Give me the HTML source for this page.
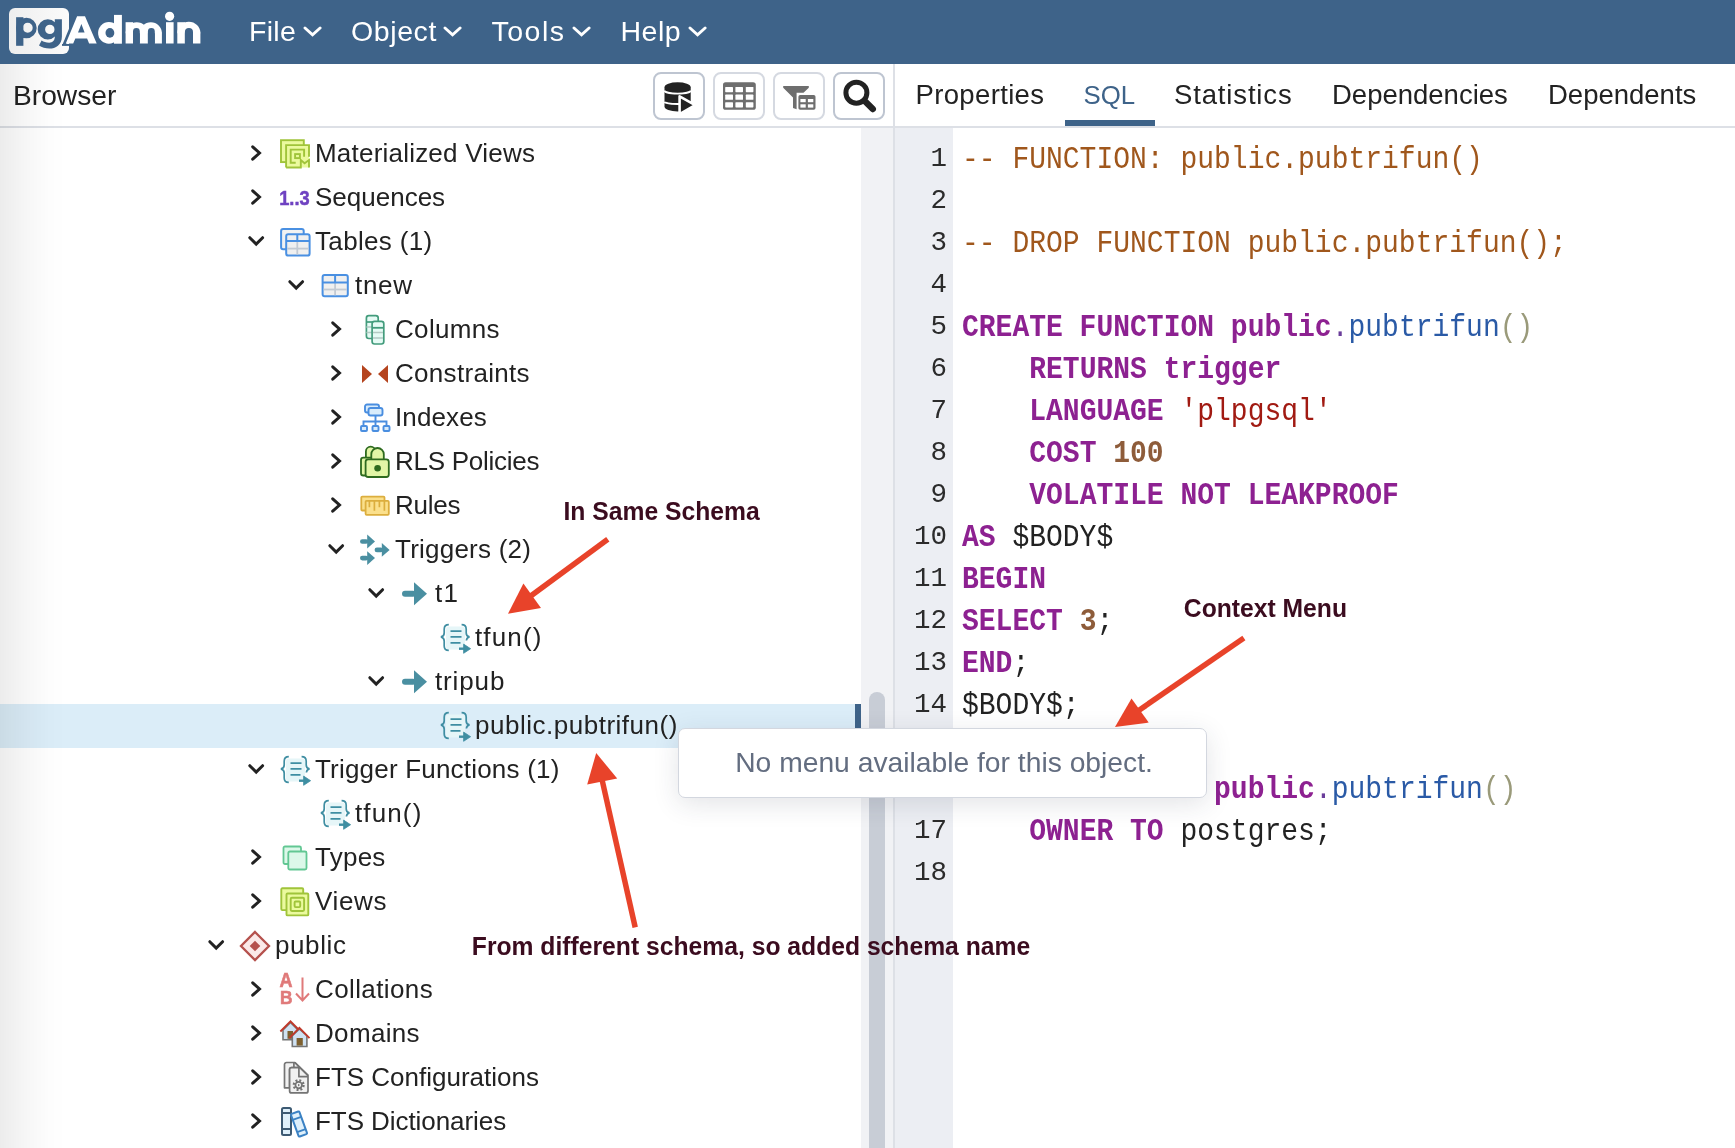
<!DOCTYPE html>
<html><head><meta charset="utf-8"><title>pgAdmin</title><style>
html,body{margin:0;padding:0}
body{width:1735px;height:1148px;overflow:hidden;position:relative;background:#fff;font-family:"Liberation Sans",sans-serif;color:#222}
.abs{position:absolute}
#wrap{position:absolute;left:0;top:0;width:1735px;height:1148px;will-change:transform}
#hdr{left:0;top:0;width:1735px;height:64px;background:#3e6389}
.menu{position:absolute;top:0;height:64px;line-height:63.6px;font-size:28.5px;color:#fff}
#vig{left:0;top:64px;width:120px;height:1084px;background:linear-gradient(to right,rgba(0,0,0,0.075),rgba(0,0,0,0.035) 25px,rgba(0,0,0,0.008) 50px,rgba(0,0,0,0) 66px);z-index:5;pointer-events:none}
#browser{left:13px;top:64px;height:62px;line-height:63px;font-size:28.2px;color:#222}
.btn{position:absolute;top:72px;width:48px;height:44px;border:2px solid #bec5d1;border-radius:8px;background:#fff}
.btn.dis{border-color:#d5d9e1}
#lline{left:0;top:126px;width:893px;height:2px;background:#dde0e6}
#rline{left:895px;top:126px;width:840px;height:2px;background:#dde0e6}
#vdiv{left:893px;top:64px;width:2px;height:1084px;background:#dde0e6}
.tab{position:absolute;top:64px;height:62px;line-height:62px;font-size:27.5px;color:#222}
#sqlul{left:1065px;top:120px;width:90px;height:6px;background:#3e6389}
#gutter{left:895px;top:128px;width:58px;height:1020px;background:#eceef3}
#track{left:861px;top:128px;width:32px;height:1020px;background:#f1f2f5}
#thumb{left:869px;top:692px;width:16px;height:470px;background:#c8cdd6;border-radius:8px}
#sel{left:0;top:704px;width:855px;height:44px;background:#dbedf8}
#selbar{left:855px;top:704px;width:6px;height:44px;background:#3e6389}
.tr{position:absolute;height:44px;line-height:42px;font-size:26px;white-space:pre;color:#222}
.ln{position:absolute;left:897px;margin-top:-1.5px;width:50px;text-align:right;height:42px;line-height:42px;font-family:"Liberation Mono",monospace;font-size:27.5px;color:#2b2b2b}
.cl{position:absolute;left:962px;height:42px;line-height:42px;font-family:"Liberation Mono",monospace;font-size:28px;white-space:pre;color:#222;transform:scaleY(1.12);transform-origin:0 28.5px}
.cm{color:#a0571c}
.kw{color:#8d2191;font-weight:bold}
.fn{color:#2a5aa6}
.dot{color:#6a3d9a}
.br{color:#9a9a7a}
.st{color:#a11a12}
.nm{color:#8e5c3a;font-weight:bold}
#popup{left:678px;top:728px;width:526.5px;height:67.5px;background:#fff;border:1.8px solid #d3d7df;border-radius:7px;box-shadow:0 6px 26px rgba(40,50,70,0.13);z-index:10}
#popup span{position:absolute;left:56.2px;top:0;line-height:66.5px;font-size:28.25px;color:#636d80;white-space:pre}
.ann{position:absolute;font-weight:bold;font-size:24.7px;color:#3b0c1f;white-space:pre;z-index:20;transform:scaleY(1.05);transform-origin:0 8px}
#ov{position:absolute;left:0;top:0;z-index:30;pointer-events:none}
</style></head>
<body>
<div id="wrap">
<div id="hdr" class="abs"></div>
<svg class="abs" style="left:0;top:0" width="220" height="64" viewBox="0 0 220 64">
<defs><linearGradient id="lg" x1="0" x2="1" y1="0" y2="0"><stop offset="0" stop-color="#eeeeee"/><stop offset="1" stop-color="#fbfbfb"/></linearGradient></defs>
<rect x="9" y="8" width="60" height="46" rx="6" fill="url(#lg)"/>
<g fill="#3e6389">
<rect x="16.1" y="17.2" width="7.3" height="28.6"/>
<path fill-rule="evenodd" d="M16.1,28 a10.3,10.3 0 1 0 20.6,0 a10.3,10.3 0 1 0 -20.6,0 z M22.7,27.8 a5,5 0 1 0 10,0 a5,5 0 1 0 -10,0 z"/>
<path fill-rule="evenodd" d="M37.7,29.4 a10.1,10.1 0 1 0 20.2,0 a10.1,10.1 0 1 0 -20.2,0 z M45.1,29.4 a4.75,4.7 0 1 0 9.5,0 a4.75,4.7 0 1 0 -9.5,0 z"/>
<path d="M54.8,19.3 H61.9 V36.5 C61.9,45 55.5,48.6 49.5,48.6 C45.5,48.6 41.8,47.4 39,45.6 L41.6,40.6 C43.5,41.9 46.2,42.7 49.2,42.7 C52.7,42.7 54.8,40.5 54.8,36.8 Z"/>
<line x1="64.2" y1="44.8" x2="71.6" y2="27" stroke="#3e6389" stroke-width="3.4"/>
<rect x="62" y="44" width="8" height="1.9"/>
</g>
<g fill="#fff">
<path fill-rule="evenodd" d="M65.8,43.5 L77.1,16.3 H85 L96.7,43.5 H89.1 L87.1,38.4 H75.3 L73.2,43.5 Z M78,32.4 H84.6 L81.4,23.9 Z"/>
<circle cx="108.9" cy="32.9" r="10.8"/>
<rect x="114" y="14.9" width="7.9" height="28.8"/>
<rect x="125.6" y="22.2" width="7.4" height="21.3"/>
<path d="M125.6,33.35 A11.15,11.15 0 0 1 147.9,33.35 Z M139.8,33.2 A11.05,11.05 0 0 1 161.9,33.2 Z"/>
<rect x="139.8" y="32.5" width="8.1" height="11"/>
<rect x="154.8" y="32.5" width="7.1" height="11"/>
<rect x="166" y="22.2" width="7.6" height="21.3"/>
<circle cx="169.6" cy="16.3" r="4.6"/>
<rect x="177.3" y="22.2" width="7.6" height="21.3"/>
<path d="M177.3,33.2 A11.55,11.55 0 0 1 200.4,33.2 Z"/>
<rect x="193" y="32.5" width="7.4" height="11"/>
</g>
<g fill="#3e6389">
<ellipse cx="109.9" cy="32.9" rx="4.4" ry="4.85"/>
<path d="M133,43.6 V31.5 A3.4,3.4 0 0 1 139.8,31.5 V43.6 Z M147.9,43.6 V31.5 A3.45,3.45 0 0 1 154.8,31.5 V43.6 Z M184.9,43.6 V32 A4.05,4.05 0 0 1 193,32 V43.6 Z"/>
</g>
</svg>
<div class="menu" style="left:249px;letter-spacing:0.3px">File</div><svg class="abs" style="left:302.5px;top:23.5px" width="20" height="16"><polyline points="2,4 9.55,10.9 17.1,4" fill="none" stroke="#fff" stroke-width="2.9" stroke-linecap="round" stroke-linejoin="miter"/></svg><div class="menu" style="left:351px;letter-spacing:0.6px">Object</div><svg class="abs" style="left:442.5px;top:23.5px" width="20" height="16"><polyline points="2,4 9.55,10.9 17.1,4" fill="none" stroke="#fff" stroke-width="2.9" stroke-linecap="round" stroke-linejoin="miter"/></svg><div class="menu" style="left:491.5px;letter-spacing:1.5px">Tools</div><svg class="abs" style="left:571.5px;top:23.5px" width="20" height="16"><polyline points="2,4 9.55,10.9 17.1,4" fill="none" stroke="#fff" stroke-width="2.9" stroke-linecap="round" stroke-linejoin="miter"/></svg><div class="menu" style="left:620.5px;letter-spacing:0.5px">Help</div><svg class="abs" style="left:688px;top:23.5px" width="20" height="16"><polyline points="2,4 9.55,10.9 17.1,4" fill="none" stroke="#fff" stroke-width="2.9" stroke-linecap="round" stroke-linejoin="miter"/></svg>
<div id="browser" class="abs">Browser</div>
<div class="btn" style="left:653px"></div><div class="btn dis" style="left:713px"></div><div class="btn dis" style="left:773px"></div><div class="btn" style="left:833px"></div>
<svg class="abs" style="left:0;top:64px;z-index:2" width="893" height="64" viewBox="0 64 893 64">
<!-- db + play -->
<path fill="#222" d="M664.5,87.2 a13.1,5 0 0 1 26.2,0 v19.2 a13.1,5 0 0 1 -26.2,0 z"/>
<path fill="none" stroke="#fff" stroke-width="1.9" d="M664.5,90.6 a13.1,3 0 0 0 26.2,0 M664.5,101.8 a13.1,2.2 0 0 0 26.2,0"/>
<path fill="#222" stroke="#fff" stroke-width="2.6" stroke-linejoin="round" d="M679.6,96.3 L695.2,105.2 L679.6,114.2 z"/>
<rect x="664" y="113" width="14" height="2" fill="#fff"/>
<!-- grid -->
<rect x="723" y="82.2" width="32.8" height="27.6" rx="2.6" fill="#6e6e6e"/>
<g fill="#fff">
<rect x="725.2" y="87" width="7.8" height="5.2" rx="0.6"/><rect x="735.4" y="87" width="7.6" height="5.2" rx="0.6"/><rect x="745.8" y="87" width="7.6" height="5.2" rx="0.6"/>
<rect x="725.2" y="94.6" width="7.8" height="5.2" rx="0.6"/><rect x="735.4" y="94.6" width="7.6" height="5.2" rx="0.6"/><rect x="745.8" y="94.6" width="7.6" height="5.2" rx="0.6"/>
<rect x="725.2" y="102.2" width="7.8" height="5.2" rx="0.6"/><rect x="735.4" y="102.2" width="7.6" height="5.2" rx="0.6"/><rect x="745.8" y="102.2" width="7.6" height="5.2" rx="0.6"/>
</g>
<!-- filter + table -->
<path d="M783.2,86 h25.6 v1.8 l-5.3,4.9 h-6.9 v16.6 l-3.6,-1.4 v-10.3 l-9.8,-9.8 z" fill="#6e6e6e"/>
<rect x="798.4" y="94.9" width="17.1" height="14.9" rx="1.8" fill="#6e6e6e"/>
<g fill="#fff"><rect x="800.4" y="99" width="5.3" height="3.2"/><rect x="807.9" y="99" width="5.4" height="3.2"/><rect x="800.4" y="104.3" width="5.3" height="3.3"/><rect x="807.9" y="104.3" width="5.4" height="3.3"/></g>
<!-- search -->
<circle cx="856.4" cy="92.7" r="10.5" fill="none" stroke="#222" stroke-width="5"/>
<line x1="865.5" y1="101.8" x2="872.8" y2="109.1" stroke="#222" stroke-width="6.4" stroke-linecap="round"/>
</svg>
<div id="lline" class="abs"></div>
<div id="rline" class="abs"></div>
<div class="tab" style="left:915.5px;letter-spacing:0.35px">Properties</div><div class="tab" style="left:1083.5px;color:#3e6389;font-size:25.8px">SQL</div><div class="tab" style="left:1174px;letter-spacing:0.85px">Statistics</div><div class="tab" style="left:1332px">Dependencies</div><div class="tab" style="left:1548px">Dependents</div>
<div id="sqlul" class="abs"></div>
<div id="track" class="abs"></div>
<div id="thumb" class="abs"></div>
<div id="vdiv" class="abs"></div>
<div id="gutter" class="abs"></div>
<div id="sel" class="abs"></div>
<div id="selbar" class="abs"></div>
<svg class="abs" style="left:0;top:0" width="893" height="1148"><polyline points="252.7,146.8 259.5,153 252.7,159.2" fill="none" stroke="#222" stroke-width="3" stroke-linecap="round" stroke-linejoin="miter"/><g transform="translate(280,140)" fill="none" stroke="#a0c43a" stroke-width="1.9" stroke-linejoin="miter"><rect x="1" y="0.2" width="22.8" height="21.9" fill="#ebfa9e"/><rect x="6.1" y="5.1" width="22.9" height="22.4" fill="#ebfa9e" stroke="none"/><path d="M6.1,27.5 V5.1 H29 V16.7 M6.1,27.5 H20.8 V20.1 L24.6,23.3 L29,20.1 V27.6"/><path d="M24.1,16.7 V9.6 H10.7 V22.7 H15.7"/><rect x="15.1" y="14.1" width="4.8" height="4"/></g><polyline points="252.7,190.8 259.5,197 252.7,203.2" fill="none" stroke="#222" stroke-width="3" stroke-linecap="round" stroke-linejoin="miter"/><text x="279.2" y="205" font-family="Liberation Sans" font-weight="bold" font-size="20.5" fill="#6f42c1" stroke="#6f42c1" stroke-width="0.5" textLength="30.5" lengthAdjust="spacingAndGlyphs">1..3</text><polyline points="249.8,237.7 256.2,244.1 262.6,237.7" fill="none" stroke="#222" stroke-width="3" stroke-linecap="round" stroke-linejoin="miter"/><g transform="translate(280,228)"><rect x="1.1" y="1.1" width="22.6" height="20.2" rx="2" fill="#f2f2f2" stroke="#4a90e2" stroke-width="2"/><rect x="6.2" y="6.2" width="23.4" height="21.4" rx="2" fill="#f0f0f0" stroke="#4a90e2" stroke-width="2"/><line x1="7.2" y1="20.6" x2="28.6" y2="20.6" stroke="#c3cad3" stroke-width="1.8"/><line x1="17.3" y1="13" x2="17.3" y2="26.6" stroke="#c3cad3" stroke-width="1.8"/><line x1="6.2" y1="13" x2="29.6" y2="13" stroke="#4a90e2" stroke-width="2"/><line x1="17.3" y1="6.2" x2="17.3" y2="13" stroke="#4a90e2" stroke-width="2"/></g><polyline points="289.8,281.7 296.2,288.1 302.6,281.7" fill="none" stroke="#222" stroke-width="3" stroke-linecap="round" stroke-linejoin="miter"/><g transform="translate(321.5,274)"><rect x="1.1" y="1.1" width="25.2" height="21.2" rx="2" fill="#f0f0f0" stroke="#4a90e2" stroke-width="2"/><line x1="2.1" y1="15.5" x2="25.3" y2="15.5" stroke="#c3cad3" stroke-width="1.8"/><line x1="13.6" y1="8.5" x2="13.6" y2="21.3" stroke="#c3cad3" stroke-width="1.8"/><line x1="1.1" y1="8.5" x2="26.3" y2="8.5" stroke="#4a90e2" stroke-width="2"/><line x1="13.6" y1="1.1" x2="13.6" y2="8.5" stroke="#4a90e2" stroke-width="2"/></g><polyline points="332.7,322.8 339.5,329 332.7,335.2" fill="none" stroke="#222" stroke-width="3" stroke-linecap="round" stroke-linejoin="miter"/><g transform="translate(365,314.5)"><rect x="1.4" y="1.2" width="11.8" height="22.8" rx="2.4" fill="#e6fbf5" stroke="#439c7c" stroke-width="1.7"/><path d="M1.4,7.5 H13.2" stroke="#439c7c" stroke-width="1.7"/><path d="M1.4,12.6 H7 M1.4,18.1 H7" stroke="#b3c9c3" stroke-width="1.5"/><rect x="7.1" y="6.8" width="11.7" height="22.7" rx="2.4" fill="#e6fbf5" stroke="#439c7c" stroke-width="1.7"/><path d="M7.1,13.3 H18.8" stroke="#439c7c" stroke-width="1.8"/><path d="M7.9,18.1 H18 M7.9,23.4 H18" stroke="#b3c9c3" stroke-width="1.5"/></g><polyline points="332.7,366.8 339.5,373 332.7,379.2" fill="none" stroke="#222" stroke-width="3" stroke-linecap="round" stroke-linejoin="miter"/><g transform="translate(362,365)" fill="#b5441e"><polygon points="0,0 10,9 0,18"/><polygon points="26,0 16,9 26,18"/></g><polyline points="332.7,410.8 339.5,417 332.7,423.2" fill="none" stroke="#222" stroke-width="3" stroke-linecap="round" stroke-linejoin="miter"/><g transform="translate(360,403.5)" fill="#d9ecfb" stroke="#4a8ee0" stroke-width="1.9"><rect x="5" y="1" width="14" height="8" rx="2"/><rect x="8.5" y="4.5" width="14" height="7.5" rx="2"/><polyline points="15.5,12 15.5,22.5" fill="none"/><polyline points="3.5,22.5 3.5,18 26.5,18 26.5,22.5" fill="none"/><rect x="1" y="22.5" width="6" height="5" rx="1"/><rect x="12.5" y="22.5" width="6" height="5" rx="1"/><rect x="23.5" y="22.5" width="6" height="5" rx="1"/></g><polyline points="332.7,454.8 339.5,461 332.7,467.2" fill="none" stroke="#222" stroke-width="3" stroke-linecap="round" stroke-linejoin="miter"/><g transform="translate(359,445)" fill="#e2f6a6" stroke="#2e6b1f" stroke-width="1.8"><path d="M6.9,12.7 V6.5 A4.8,4.8 0 0 1 16.5,6.5 V12.7"/><rect x="2" y="12.7" width="19" height="17.8" rx="2.3"/><path d="M12.3,14.3 V9.25 A6.25,6.25 0 0 1 24.8,9.25 V14.3"/><rect x="6.6" y="14.3" width="23.2" height="17.7" rx="2.5"/><circle cx="18.6" cy="23.2" r="3.3" fill="#2e6b1f" stroke="none"/></g><polyline points="332.7,498.8 339.5,505 332.7,511.2" fill="none" stroke="#222" stroke-width="3" stroke-linecap="round" stroke-linejoin="miter"/><g transform="translate(359.5,495)" fill="#fbe08c" stroke="#dcae3e" stroke-width="1.8"><rect x="1.8" y="1.6" width="23.2" height="13.9" rx="1"/><rect x="6.1" y="5.8" width="23.2" height="14" rx="1"/><path d="M9.9,5.8 V12.3 M14.9,5.8 V15.7 M19.9,5.8 V12.3 M24.9,5.8 V15.7" fill="none" stroke-width="1.7"/></g><polyline points="329.8,545.7 336.2,552.1 342.6,545.7" fill="none" stroke="#222" stroke-width="3" stroke-linecap="round" stroke-linejoin="miter"/><g transform="translate(360,533.5)"><g transform="translate(0,8) scale(0.6)" fill="#4a8fa1"><rect x="0" y="-3.9" width="14" height="7.8" rx="3.9"/><polygon points="12,-11.5 25,0 12,11.5"/></g><g transform="translate(14.6,16.4) scale(0.6)" fill="#4a8fa1"><rect x="0" y="-3.9" width="14" height="7.8" rx="3.9"/><polygon points="12,-11.5 25,0 12,11.5"/></g><g transform="translate(0,24.6) scale(0.6)" fill="#4a8fa1"><rect x="0" y="-3.9" width="14" height="7.8" rx="3.9"/><polygon points="12,-11.5 25,0 12,11.5"/></g></g><polyline points="369.8,589.7 376.2,596.1 382.6,589.7" fill="none" stroke="#222" stroke-width="3" stroke-linecap="round" stroke-linejoin="miter"/><g transform="translate(402,593.7) scale(1.0)" fill="#4a8fa1"><rect x="0" y="-3" width="14" height="6" rx="3"/><polygon points="12,-11.5 25,0 12,11.5"/></g><g transform="translate(440,623.5)"><rect x="6" y="3" width="19" height="23" rx="3" fill="#e6f6f8"/><path d="M8.8,1.2 C5.2,1.2 4.2,2.8 4.2,5.8 V9.4 C4.2,11.6 3.2,12.9 0.9,13.4 C3.2,13.9 4.2,15.4 4.2,17.6 V22.4 C4.2,25.4 5.2,26.8 8.8,26.8" fill="none" stroke="#3f8ea2" stroke-width="1.7"/><path d="M21.6,1.2 C25.2,1.2 26.2,2.8 26.2,5.8 V9.4 C26.2,11.6 27.2,12.9 29.5,13.4 C27.6,13.9 26.6,15 26.4,17" fill="none" stroke="#3f8ea2" stroke-width="1.7"/><path d="M10.5,7.6 h11 M10.5,13.4 h11 M10.5,19.4 h10" fill="none" stroke="#3f8ea2" stroke-width="1.8"/><path d="M19,25.2 h6" stroke="#3f8ea2" stroke-width="2.4"/><polygon points="23.6,20.6 30.6,25.2 23.6,29.8" fill="#3f8ea2" stroke="#3f8ea2" stroke-width="0.8" stroke-linejoin="round"/></g><polyline points="369.8,677.7 376.2,684.1 382.6,677.7" fill="none" stroke="#222" stroke-width="3" stroke-linecap="round" stroke-linejoin="miter"/><g transform="translate(402,681.7) scale(1.0)" fill="#4a8fa1"><rect x="0" y="-3" width="14" height="6" rx="3"/><polygon points="12,-11.5 25,0 12,11.5"/></g><g transform="translate(440,711.5)"><rect x="6" y="3" width="19" height="23" rx="3" fill="#e6f6f8"/><path d="M8.8,1.2 C5.2,1.2 4.2,2.8 4.2,5.8 V9.4 C4.2,11.6 3.2,12.9 0.9,13.4 C3.2,13.9 4.2,15.4 4.2,17.6 V22.4 C4.2,25.4 5.2,26.8 8.8,26.8" fill="none" stroke="#3f8ea2" stroke-width="1.7"/><path d="M21.6,1.2 C25.2,1.2 26.2,2.8 26.2,5.8 V9.4 C26.2,11.6 27.2,12.9 29.5,13.4 C27.6,13.9 26.6,15 26.4,17" fill="none" stroke="#3f8ea2" stroke-width="1.7"/><path d="M10.5,7.6 h11 M10.5,13.4 h11 M10.5,19.4 h10" fill="none" stroke="#3f8ea2" stroke-width="1.8"/><path d="M19,25.2 h6" stroke="#3f8ea2" stroke-width="2.4"/><polygon points="23.6,20.6 30.6,25.2 23.6,29.8" fill="#3f8ea2" stroke="#3f8ea2" stroke-width="0.8" stroke-linejoin="round"/></g><polyline points="249.8,765.7 256.2,772.1 262.6,765.7" fill="none" stroke="#222" stroke-width="3" stroke-linecap="round" stroke-linejoin="miter"/><g transform="translate(280,755.5)"><rect x="6" y="3" width="19" height="23" rx="3" fill="#e6f6f8"/><path d="M8.8,1.2 C5.2,1.2 4.2,2.8 4.2,5.8 V9.4 C4.2,11.6 3.2,12.9 0.9,13.4 C3.2,13.9 4.2,15.4 4.2,17.6 V22.4 C4.2,25.4 5.2,26.8 8.8,26.8" fill="none" stroke="#3f8ea2" stroke-width="1.7"/><path d="M21.6,1.2 C25.2,1.2 26.2,2.8 26.2,5.8 V9.4 C26.2,11.6 27.2,12.9 29.5,13.4 C27.6,13.9 26.6,15 26.4,17" fill="none" stroke="#3f8ea2" stroke-width="1.7"/><path d="M10.5,7.6 h11 M10.5,13.4 h11 M10.5,19.4 h10" fill="none" stroke="#3f8ea2" stroke-width="1.8"/><path d="M19,25.2 h6" stroke="#3f8ea2" stroke-width="2.4"/><polygon points="23.6,20.6 30.6,25.2 23.6,29.8" fill="#3f8ea2" stroke="#3f8ea2" stroke-width="0.8" stroke-linejoin="round"/></g><g transform="translate(320,799.5)"><rect x="6" y="3" width="19" height="23" rx="3" fill="#e6f6f8"/><path d="M8.8,1.2 C5.2,1.2 4.2,2.8 4.2,5.8 V9.4 C4.2,11.6 3.2,12.9 0.9,13.4 C3.2,13.9 4.2,15.4 4.2,17.6 V22.4 C4.2,25.4 5.2,26.8 8.8,26.8" fill="none" stroke="#3f8ea2" stroke-width="1.7"/><path d="M21.6,1.2 C25.2,1.2 26.2,2.8 26.2,5.8 V9.4 C26.2,11.6 27.2,12.9 29.5,13.4 C27.6,13.9 26.6,15 26.4,17" fill="none" stroke="#3f8ea2" stroke-width="1.7"/><path d="M10.5,7.6 h11 M10.5,13.4 h11 M10.5,19.4 h10" fill="none" stroke="#3f8ea2" stroke-width="1.8"/><path d="M19,25.2 h6" stroke="#3f8ea2" stroke-width="2.4"/><polygon points="23.6,20.6 30.6,25.2 23.6,29.8" fill="#3f8ea2" stroke="#3f8ea2" stroke-width="0.8" stroke-linejoin="round"/></g><polyline points="252.7,850.8 259.5,857 252.7,863.2" fill="none" stroke="#222" stroke-width="3" stroke-linecap="round" stroke-linejoin="miter"/><g transform="translate(282.5,845.5)" fill="#dcf8e9" stroke="#62c793" stroke-width="1.8"><rect x="1" y="1" width="17.5" height="17.5" rx="1.5"/><rect x="5.8" y="6" width="18.2" height="18" rx="1.5"/></g><polyline points="252.7,894.8 259.5,901 252.7,907.2" fill="none" stroke="#222" stroke-width="3" stroke-linecap="round" stroke-linejoin="miter"/><g transform="translate(280,887.5)" fill="#ebfa9e" stroke="#a0c43a" stroke-width="1.9"><rect x="1.3" y="0.8" width="21.9" height="21.8" rx="1"/><rect x="6.5" y="6" width="21.8" height="21.9" rx="1"/><rect x="10.7" y="10.3" width="13.4" height="13.2" rx="1.2" fill="none"/><rect x="14.6" y="14" width="5.6" height="5.6" rx="1" fill="none"/></g><polyline points="209.8,941.7 216.2,948.1 222.6,941.7" fill="none" stroke="#222" stroke-width="3" stroke-linecap="round" stroke-linejoin="miter"/><g transform="translate(255,946)"><polygon points="0,-14 14,0 0,14 -14,0" fill="#fbe9e8" stroke="#b5514d" stroke-width="2.3" stroke-linejoin="miter"/><polygon points="0,-5.3 5.3,0 0,5.3 -5.3,0" fill="#b5514d"/></g><polyline points="252.7,982.8 259.5,989 252.7,995.2" fill="none" stroke="#222" stroke-width="3" stroke-linecap="round" stroke-linejoin="miter"/><g transform="translate(279.5,972.5)"><text x="0" y="14.8" font-family="Liberation Sans" font-weight="bold" font-size="20" fill="#e07a7a" stroke="#e07a7a" stroke-width="0.6" textLength="13" lengthAdjust="spacingAndGlyphs">A</text><text x="0.5" y="31.6" font-family="Liberation Sans" font-weight="bold" font-size="18.5" fill="#e07a7a" stroke="#e07a7a" stroke-width="0.6" textLength="12.5" lengthAdjust="spacingAndGlyphs">B</text><path d="M23,5 v23 M16.5,21 l6.5,7 l6.5,-7" fill="none" stroke="#e07a7a" stroke-width="2"/></g><polyline points="252.7,1026.8 259.5,1033 252.7,1039.2" fill="none" stroke="#222" stroke-width="3" stroke-linecap="round" stroke-linejoin="miter"/><g transform="translate(280,1020)"><polygon points="3,10 10.5,2.5 18,10 18,19.7 3,19.7" fill="#cfe2f3" stroke="#757575" stroke-width="1.6" stroke-linejoin="miter"/><rect x="7.5" y="11" width="5.5" height="7.8" fill="#7d6030"/><polyline points="0.4,11.5 10.5,1.3 19,9.8" fill="none" stroke="#c0392b" stroke-width="1.9"/><polygon points="12.3,15.6 19.4,8.8 26.9,15.6 26.9,26.5 12.3,26.5" fill="#cfe2f3" stroke="#757575" stroke-width="1.6" stroke-linejoin="miter"/><rect x="16.6" y="18" width="6.2" height="7.6" fill="#7d6030"/><polyline points="9.3,18.2 19.4,7.9 29.5,18.2" fill="none" stroke="#c0392b" stroke-width="1.9"/></g><polyline points="252.7,1070.8 259.5,1077 252.7,1083.2" fill="none" stroke="#222" stroke-width="3" stroke-linecap="round" stroke-linejoin="miter"/><g transform="translate(283,1061.8)" stroke="#747474" stroke-width="1.7" stroke-linejoin="round"><path d="M1.5,26 V2.7 a2,2 0 0 1 2,-2 H11.9 L17,5.8 H8.6 a2,2 0 0 0 -2,2 V26 Z" fill="#f1f1f1"/><path d="M10.9,0.7 V5.8" fill="none"/><path d="M6.6,7.8 a2,2 0 0 1 2,-2 H17 L25,13.6 V29.1 a2,2 0 0 1 -2,2 H8.6 a2,2 0 0 1 -2,-2 Z" fill="#f1f1f1"/><path d="M11.9,0.7 L25,13.6 M15.9,5.8 V14.9 H25" fill="none"/><circle cx="15.7" cy="23.3" r="4.8" fill="none" stroke-width="2.4" stroke-dasharray="1.9 1.87"/><circle cx="15.7" cy="23.3" r="3.3" fill="#f1f1f1" stroke-width="1.7"/><polygon points="15,22 17,23.3 15,24.6" fill="#747474" stroke="none"/></g><polyline points="252.7,1114.8 259.5,1121 252.7,1127.2" fill="none" stroke="#222" stroke-width="3" stroke-linecap="round" stroke-linejoin="miter"/><g transform="translate(281,1107)"><rect x="1" y="1" width="9" height="27" rx="1.5" fill="#dff0fb" stroke="#3d5a73" stroke-width="2"/><path d="M1,6 h9 M1,22 h9" stroke="#3d5a73" stroke-width="1.8"/><g transform="translate(18,17) rotate(-20)"><rect x="-4.5" y="-12" width="9" height="24" rx="1" fill="#dff0fb" stroke="#3b82c4" stroke-width="2"/><path d="M-4.5,-6 h9 M-4.5,7 h9" stroke="#3b82c4" stroke-width="1.8"/></g></g></svg>
<div class="tr" style="left:315px;top:132px;letter-spacing:0.212px">Materialized Views</div><div class="tr" style="left:315px;top:176px;letter-spacing:0.000px">Sequences</div><div class="tr" style="left:315px;top:220px;letter-spacing:0.333px">Tables (1)</div><div class="tr" style="left:355px;top:264px;letter-spacing:0.667px">tnew</div><div class="tr" style="left:395px;top:308px;letter-spacing:0.333px">Columns</div><div class="tr" style="left:395px;top:352px;letter-spacing:0.300px">Constraints</div><div class="tr" style="left:395px;top:396px;letter-spacing:0.117px">Indexes</div><div class="tr" style="left:395px;top:440px;letter-spacing:-0.273px">RLS Policies</div><div class="tr" style="left:395px;top:484px;letter-spacing:-0.250px">Rules</div><div class="tr" style="left:395px;top:528px;letter-spacing:0.227px">Triggers (2)</div><div class="tr" style="left:435px;top:572px;letter-spacing:1.400px">t1</div><div class="tr" style="left:475px;top:616px;letter-spacing:1.140px">tfun()</div><div class="tr" style="left:435px;top:660px;letter-spacing:0.860px">tripub</div><div class="tr" style="left:475px;top:704px;letter-spacing:0.512px">public.pubtrifun()</div><div class="tr" style="left:315px;top:748px;letter-spacing:0.200px">Trigger Functions (1)</div><div class="tr" style="left:355px;top:792px;letter-spacing:1.120px">tfun()</div><div class="tr" style="left:315px;top:836px;letter-spacing:0.250px">Types</div><div class="tr" style="left:315px;top:880px;letter-spacing:0.650px">Views</div><div class="tr" style="left:275px;top:924px;letter-spacing:0.600px">public</div><div class="tr" style="left:315px;top:968px;letter-spacing:0.389px">Collations</div><div class="tr" style="left:315px;top:1012px;letter-spacing:0.333px">Domains</div><div class="tr" style="left:315px;top:1056px;letter-spacing:0.000px">FTS Configurations</div><div class="tr" style="left:315px;top:1100px;letter-spacing:-0.067px">FTS Dictionaries</div>
<div class="ln" style="top:139.5px">1</div><div class="cl" style="top:139.5px"><span class="cm">-- FUNCTION: public.pubtrifun()</span></div><div class="ln" style="top:181.5px">2</div><div class="ln" style="top:223.5px">3</div><div class="cl" style="top:223.5px"><span class="cm">-- DROP FUNCTION public.pubtrifun();</span></div><div class="ln" style="top:265.5px">4</div><div class="ln" style="top:307.5px">5</div><div class="cl" style="top:307.5px"><span class="kw">CREATE FUNCTION public</span><span class="dot">.</span><span class="fn">pubtrifun</span><span class="br">()</span></div><div class="ln" style="top:349.5px">6</div><div class="cl" style="top:349.5px">    <span class="kw">RETURNS trigger</span></div><div class="ln" style="top:391.5px">7</div><div class="cl" style="top:391.5px">    <span class="kw">LANGUAGE</span> <span class="st">'plpgsql'</span></div><div class="ln" style="top:433.5px">8</div><div class="cl" style="top:433.5px">    <span class="kw">COST</span> <span class="nm">100</span></div><div class="ln" style="top:475.5px">9</div><div class="cl" style="top:475.5px">    <span class="kw">VOLATILE NOT LEAKPROOF</span></div><div class="ln" style="top:517.5px">10</div><div class="cl" style="top:517.5px"><span class="kw">AS</span> $BODY$</div><div class="ln" style="top:559.5px">11</div><div class="cl" style="top:559.5px"><span class="kw">BEGIN</span></div><div class="ln" style="top:601.5px">12</div><div class="cl" style="top:601.5px"><span class="kw">SELECT</span> <span class="nm">3</span>;</div><div class="ln" style="top:643.5px">13</div><div class="cl" style="top:643.5px"><span class="kw">END</span>;</div><div class="ln" style="top:685.5px">14</div><div class="cl" style="top:685.5px">$BODY$;</div><div class="ln" style="top:727.5px">15</div><div class="ln" style="top:769.5px">16</div><div class="cl" style="top:769.5px">               <span class="kw">public</span><span class="dot">.</span><span class="fn">pubtrifun</span><span class="br">()</span></div><div class="ln" style="top:811.5px">17</div><div class="cl" style="top:811.5px">    <span class="kw">OWNER TO</span> postgres;</div><div class="ln" style="top:853.5px">18</div>
<div id="popup" class="abs"><span>No menu available for this object.</span></div>
<div class="ann" style="left:563.5px;top:497.3px">In Same Schema</div><div class="ann" style="left:1183.8px;top:594.3px">Context Menu</div><div class="ann" style="left:471.8px;top:932.3px">From different schema, so added schema name</div>
<svg id="ov" width="1735" height="1148">
<line x1="607.8" y1="539.3" x2="528" y2="598" stroke="#e8432a" stroke-width="5.5"/>
<polygon points="508,613.7 523.4,583.6 541,607.9" fill="#e8432a"/>
<line x1="1243.9" y1="638" x2="1135" y2="713" stroke="#e8432a" stroke-width="5.5"/>
<polygon points="1115,727 1131.5,698.6 1148.7,722.6" fill="#e8432a"/>
<line x1="635.2" y1="927.3" x2="601" y2="775" stroke="#e8432a" stroke-width="5.5"/>
<polygon points="596.2,753 587.2,784.5 617.2,778.5" fill="#e8432a"/>
</svg>
<div id="vig" class="abs"></div>
</div>
</body></html>
